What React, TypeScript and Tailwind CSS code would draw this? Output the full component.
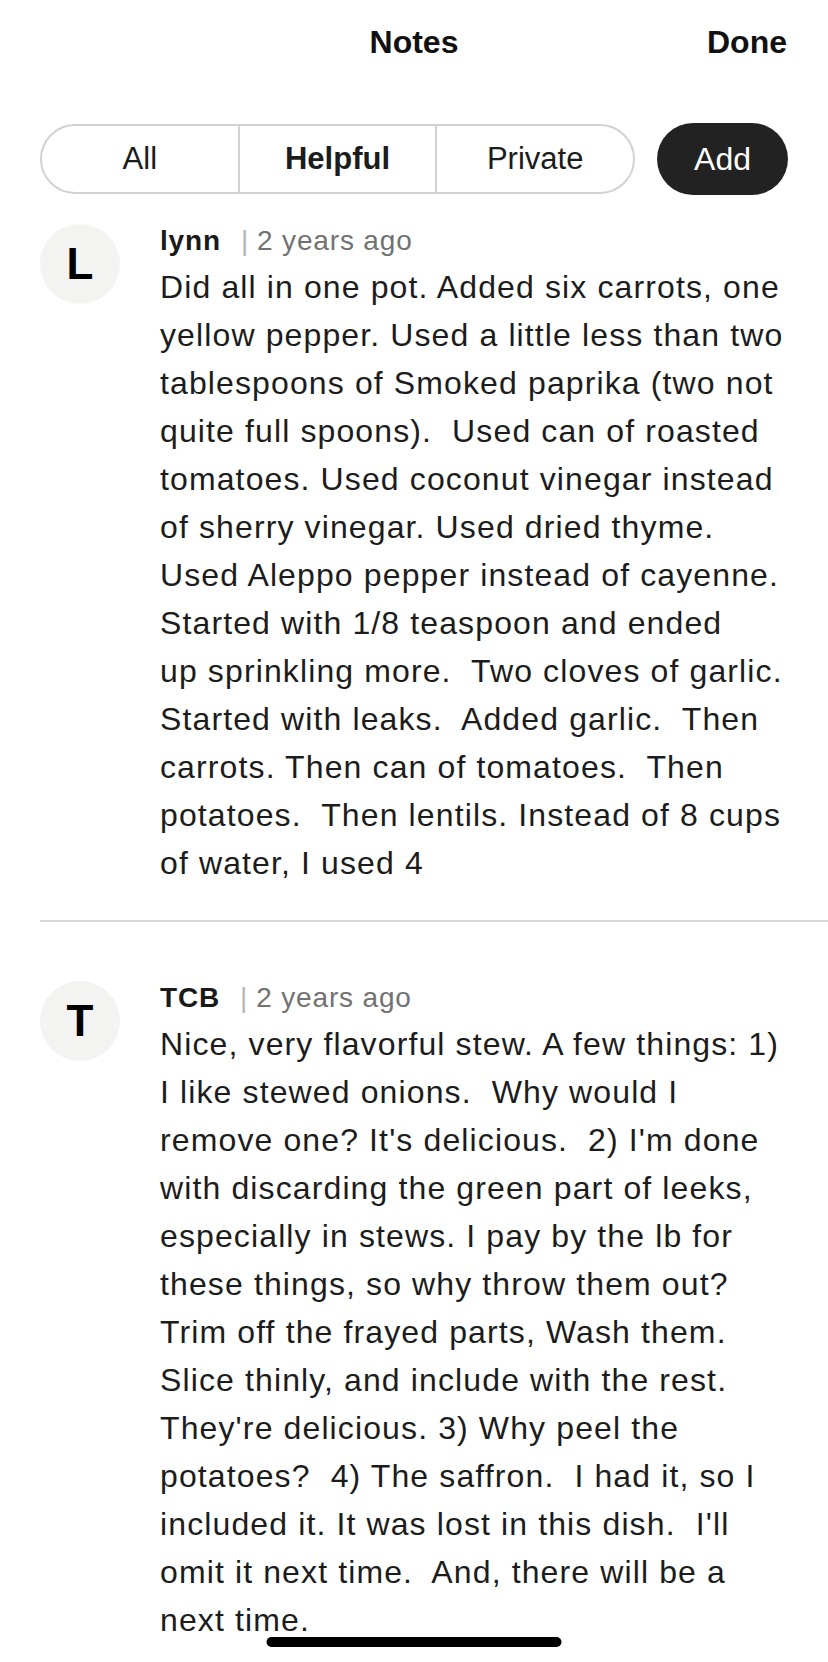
import React from "react";

const lynnLines = [
  "Did all in one pot. Added six carrots, one",
  "yellow pepper. Used a little less than two",
  "tablespoons of Smoked paprika (two not",
  "quite full spoons).  Used can of roasted",
  "tomatoes. Used coconut vinegar instead",
  "of sherry vinegar. Used dried thyme.",
  "Used Aleppo pepper instead of cayenne.",
  "Started with 1/8 teaspoon and ended",
  "up sprinkling more.  Two cloves of garlic.",
  "Started with leaks.  Added garlic.  Then",
  "carrots. Then can of tomatoes.  Then",
  "potatoes.  Then lentils. Instead of 8 cups",
  "of water, I used 4",
];

const tcbLines = [
  "Nice, very flavorful stew. A few things: 1)",
  "I like stewed onions.  Why would I",
  "remove one? It's delicious.  2) I'm done",
  "with discarding the green part of leeks,",
  "especially in stews. I pay by the lb for",
  "these things, so why throw them out?",
  "Trim off the frayed parts, Wash them.",
  "Slice thinly, and include with the rest.",
  "They're delicious. 3) Why peel the",
  "potatoes?  4) The saffron.  I had it, so I",
  "included it. It was lost in this dish.  I'll",
  "omit it next time.  And, there will be a",
  "next time.",
];

const Note = ({
  initial,
  name,
  lines,
}: {
  initial: string;
  name: string;
  lines: string[];
}) => (
  <div className="flex gap-10 pl-10">
    <div className="w-20 h-20 shrink-0 rounded-full bg-[#f3f3f2] flex items-center justify-center text-[44px] font-bold text-black">
      {initial}
    </div>
    <div className="pt-[2px] flex-1 min-w-0">
      <div className="flex items-baseline text-[28px] leading-[30px] tracking-[0.03em]">
        <span className="font-bold text-[#1a1a1a]">{name}</span>
        <span className="ml-[20px] text-[#b5b5b5]">|</span>
        <span className="ml-[8px] text-[#727272]">2 years ago</span>
      </div>
      <div className="mt-[7px] text-[32px] leading-[48px] tracking-[0.035em] text-[#1c1c1c]">
        {lines.map((l, i) => (
          <div key={i} className="whitespace-pre">
            {l}
          </div>
        ))}
      </div>
    </div>
  </div>
);

export default function App() {
  return (
    <div
      className="relative w-[828px] h-[1662px] overflow-hidden bg-white text-[#1c1c1c]"
      style={{ fontFamily: '"Liberation Sans", Arial, sans-serif' }}
    >
      <div className="relative h-[84px] flex items-center justify-center px-10">
        <span className="text-[32px] font-bold text-[#111]">Notes</span>
        <span className="absolute right-[41px] text-[32px] font-bold text-[#111]">
          Done
        </span>
      </div>

      <div className="mt-[39px] flex items-center gap-[22px] px-10">
        <div className="flex-1 h-[70px] flex rounded-full border-2 border-[#d2d2d2] overflow-hidden">
          <div className="flex-1 flex items-center justify-center text-[31px]">
            All
          </div>
          <div className="flex-1 flex items-center justify-center text-[31px] font-bold border-x-2 border-[#d2d2d2]">
            Helpful
          </div>
          <div className="flex-1 flex items-center justify-center text-[31px]">
            Private
          </div>
        </div>
        <button className="w-[131px] h-[72px] rounded-full bg-[#222] text-white text-[32px] flex items-center justify-center">
          Add
        </button>
      </div>

      <div className="mt-[29px]">
        <Note initial="L" name="lynn" lines={lynnLines} />
      </div>

      <div className="ml-10 mt-[33px] h-[2px] bg-[#d6d6d6]" />

      <div className="mt-[59px]">
        <Note initial="T" name="TCB" lines={tcbLines} />
      </div>

      <div className="absolute left-1/2 -translate-x-1/2 top-[1637px] w-[295px] h-[10px] rounded-full bg-black" />
    </div>
  );
}
